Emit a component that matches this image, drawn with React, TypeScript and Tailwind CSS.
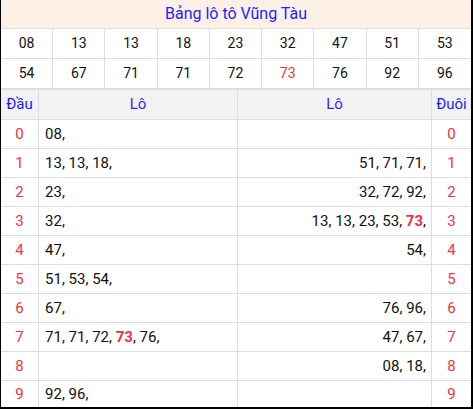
import React from "react";

const row1 = ["08", "13", "13", "18", "23", "32", "47", "51", "53"];
const row2 = ["54", "67", "71", "71", "72", "73", "76", "92", "96"];

type Item = { v: string; hot?: boolean };
const dau: Item[][] = [
  [{ v: "08" }],
  [{ v: "13" }, { v: "13" }, { v: "18" }],
  [{ v: "23" }],
  [{ v: "32" }],
  [{ v: "47" }],
  [{ v: "51" }, { v: "53" }, { v: "54" }],
  [{ v: "67" }],
  [{ v: "71" }, { v: "71" }, { v: "72" }, { v: "73", hot: true }, { v: "76" }],
  [],
  [{ v: "92" }, { v: "96" }],
];
const duoi: Item[][] = [
  [],
  [{ v: "51" }, { v: "71" }, { v: "71" }],
  [{ v: "32" }, { v: "72" }, { v: "92" }],
  [{ v: "13" }, { v: "13" }, { v: "23" }, { v: "53" }, { v: "73", hot: true }],
  [{ v: "54" }],
  [],
  [{ v: "76" }, { v: "96" }],
  [{ v: "47" }, { v: "67" }],
  [{ v: "08" }, { v: "18" }],
  [],
];

function List({ items }: { items: Item[] }) {
  return (
    <>
      {items.map((it, i) => (
        <React.Fragment key={i}>
          {it.hot ? (
            <span className="font-bold text-[#e8334a]">{it.v}</span>
          ) : (
            <span>{it.v}</span>
          )}
          ,{i < items.length - 1 ? " " : ""}
        </React.Fragment>
      ))}
    </>
  );
}

export default function App() {
  return (
    <div
      className="w-[473px] h-[409px] overflow-hidden border-l border-r-2 border-b-2 border-black bg-white flex flex-col text-[14px] text-[#111]"
      style={{ fontFamily: "Roboto, 'Noto Sans', sans-serif" }}
    >
      <div className="h-[29px] shrink-0 bg-[#fdf0e6] border-b border-[#dddddd] flex items-center justify-center text-[16px] text-[#1f1fff]">
        Bảng lô tô Vũng Tàu
      </div>
      {[row1, row2].map((r, ri) => (
        <div
          key={ri}
          className={`grid grid-cols-9 shrink-0 ${ri === 0 ? "h-[30px] border-b border-[#dddddd]" : "h-[31px] border-b-2 border-[#dddddd]"}`}
        >
          {r.map((n, i) => (
            <div
              key={i}
              className={`flex items-center justify-center ${i < 8 ? "border-r border-[#dddddd]" : ""} ${n === "73" ? "text-[#ee3344]" : ""}`}
            >
              {n}
            </div>
          ))}
        </div>
      ))}
      <div className="flex h-[30px] shrink-0 bg-[#f2f2f2] border-b border-[#dddddd] text-[15px]">
        <div className="w-[38px] flex items-center justify-center border-r border-[#dddddd] text-[#1a1aff]">Đầu</div>
        <div className="w-[199px] flex items-center justify-center border-r border-[#dddddd] text-[#3a1cff]">Lô</div>
        <div className="w-[194px] flex items-center justify-center border-r border-[#dddddd] text-[#3a1cff]">Lô</div>
        <div className="flex-1 flex items-center justify-center text-[#1a1aff]">Đuôi</div>
      </div>
      {dau.map((d, i) => (
        <div
          key={i}
          className={`flex shrink-0 text-[15px] ${i < 9 ? "h-[29px] border-b border-[#dddddd]" : "flex-1"}`}
        >
          <div className="w-[38px] flex items-center justify-center border-r border-[#dddddd] text-[#ee3344]">{i}</div>
          <div className="w-[199px] flex items-center justify-start pl-[6px] border-r border-[#dddddd] whitespace-pre">
            <List items={d} />
          </div>
          <div className="w-[194px] flex items-center justify-end pr-[5px] border-r border-[#dddddd] whitespace-pre">
            <List items={duoi[i]} />
          </div>
          <div className="flex-1 flex items-center justify-center text-[#ee3344]">{i}</div>
        </div>
      ))}
    </div>
  );
}
